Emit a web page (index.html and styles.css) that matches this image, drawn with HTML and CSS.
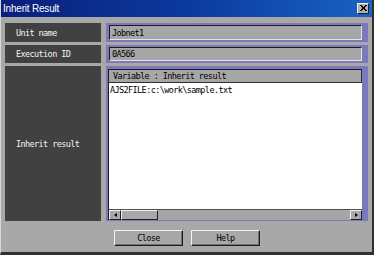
FILE: index.html
```html
<!DOCTYPE html>
<html lang="en">
<head>
    <meta charset="UTF-8" />
    <title>Inherit Result</title>
    <link rel="stylesheet" href="styles.css">
</head>
<body>
    <div class="window">
        <div class="titlebar">
            <span class="title">Inherit Result</span>
            <span class="close-box">
                <svg width="8" height="7" viewBox="0 0 8 7">
                    <path d="M1 0 L7 6 M7 0 L1 6 M2 0 L8 6 M8 0 L2 6" stroke="#000" stroke-width="1"/>
                </svg>
            </span>
        </div>

        <div class="content">
            <div class="label">Unit name</div>
            <div class="cell">
                <div class="field">Jobnet1</div>
            </div>

            <div class="label">Execution ID</div>
            <div class="cell">
                <div class="field">0A566</div>
            </div>

            <div class="label label-tall">Inherit result</div>
            <div class="cell cell-tall">
                <div class="listbox">
                    <div class="list-head">Variable : Inherit result</div>
                    <div class="list-body">AJS2FILE:c:\work\sample.txt</div>
                    <div class="hscroll">
                        <span class="sbtn"><span class="arr-left"></span></span>
                        <span class="thumb"></span>
                        <span class="track"></span>
                        <span class="sbtn"><span class="arr-right"></span></span>
                    </div>
                </div>
            </div>
        </div>

        <div class="buttons">
            <button class="btn">Close</button>
            <button class="btn">Help</button>
        </div>
    </div>
</body>
</html>
```

FILE: styles.css
```css
body {
    margin: 0;
    background: #a8a8a8;
    font-family: "DejaVu Sans Mono", "Liberation Mono", monospace;
}

.window {
    width: 374px;
    height: 255px;
    box-sizing: border-box;
    background: #a8a8a8;
    border-left: 1px solid #d8d8d8;
    border-right: 2px solid #303030;
    border-bottom: 3px solid #303030;
    display: flex;
    flex-direction: column;
}

.titlebar {
    height: 17px;
    background: linear-gradient(to right, #0a1f7a, #0b3a9e 50%, #1a62c4);
    display: flex;
    align-items: center;
    justify-content: space-between;
    padding: 0 3px 0 2px;
}

.title {
    color: #fff;
    font-family: "Liberation Sans", Arial, sans-serif;
    font-size: 10px;
    letter-spacing: -0.2px;
}

.close-box {
    width: 12px;
    height: 11px;
    box-sizing: border-box;
    background: #b0b0b0;
    border: 1px solid;
    border-color: #f0f0f0 #202020 #202020 #f0f0f0;
    display: flex;
    align-items: center;
    justify-content: center;
}

.content {
    display: grid;
    grid-template-columns: 96px 1fr;
    grid-template-rows: 19px 18px 155px;
    column-gap: 5px;
    row-gap: 3px;
    padding: 6px 4px 0 4px;
}

.label {
    background: #414141;
    color: #f4f4f4;
    font-size: 8.5px;
    letter-spacing: -0.6px;
    padding-left: 11px;
    display: flex;
    align-items: center;
}

.cell {
    background: #7b78bd;
    padding: 2px 6px 2px 3px;
}

.field {
    height: 100%;
    box-sizing: border-box;
    background: #a6a6a6;
    border: 1px solid;
    border-color: #1c1c1c #e4e4e4 #e4e4e4 #1c1c1c;
    font-size: 8.5px;
    letter-spacing: -0.6px;
    padding-left: 2px;
    display: flex;
    align-items: center;
}

.cell-tall {
    padding: 3px 6px 1px 2px;
}

.listbox {
    height: 100%;
    box-sizing: border-box;
    border-top: 1px solid #1c1c1c;
    border-left: 1px solid #1c1c1c;
    background: #fff;
    display: flex;
    flex-direction: column;
    font-size: 8.5px;
    letter-spacing: -0.6px;
}

.list-head {
    height: 13px;
    box-sizing: border-box;
    background: #a6a6a6;
    border-bottom: 1px solid #303030;
    border-right: 1px solid #303030;
    padding-left: 4px;
    display: flex;
    align-items: center;
}

.list-body {
    flex: 1;
    padding: 2px 0 0 1px;
}

.hscroll {
    height: 10px;
    display: flex;
    background: #a6a6a6;
    border-top: 1px solid #505050;
}

.sbtn,
.thumb {
    box-sizing: border-box;
    border: 1px solid;
    border-color: #f0f0f0 #202020 #202020 #f0f0f0;
    background: #a8a8a8;
}

.sbtn {
    width: 12px;
    display: flex;
    align-items: center;
    justify-content: center;
}

.thumb {
    width: 37px;
}

.track {
    flex: 1;
}

.arr-left {
    border-top: 2px solid transparent;
    border-bottom: 2px solid transparent;
    border-right: 3px solid #000;
}

.arr-right {
    border-top: 2px solid transparent;
    border-bottom: 2px solid transparent;
    border-left: 3px solid #000;
}

.buttons {
    display: flex;
    justify-content: center;
    gap: 8px;
    padding-top: 9px;
    padding-left: 1px;
}

.btn {
    width: 69px;
    height: 16px;
    padding: 0;
    background: #a8a8a8;
    border: 1px solid;
    border-color: #f4f4f4 #1c1c1c #1c1c1c #f4f4f4;
    box-shadow: inset -1px -1px 0 #707070;
    font-family: "DejaVu Sans Mono", "Liberation Mono", monospace;
    font-size: 8.5px;
    letter-spacing: -0.6px;
    color: #000;
}
```
